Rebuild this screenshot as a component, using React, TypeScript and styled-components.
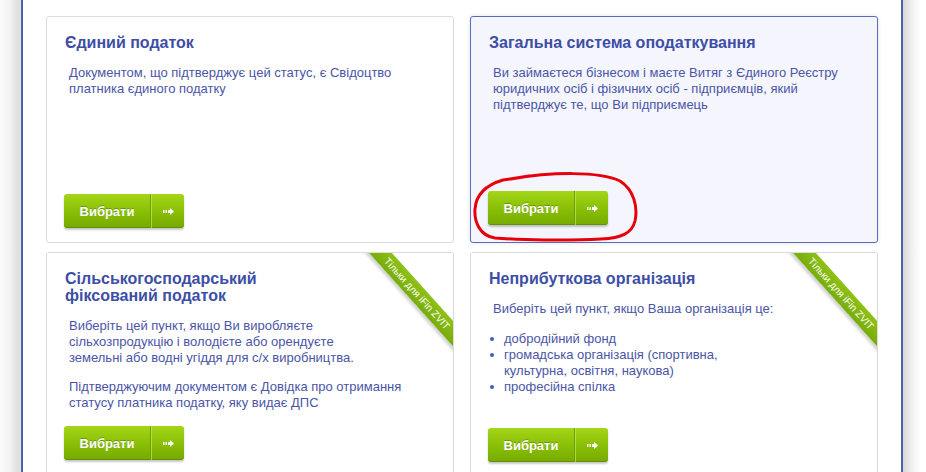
import React from "react";
import styled, { createGlobalStyle } from "styled-components";

const Global = createGlobalStyle`
  html, body { margin: 0; padding: 0; background: #fff; }
  body { font-family: "Liberation Sans", Arial, sans-serif; overflow: hidden; }
`;

const Page = styled.div`
  display: flex;
  width: 926px;
  height: 472px;
  overflow: hidden;
`;

const LeftShade = styled.div`
  width: 21px;
  flex: none;
  background: linear-gradient(to right, #fbfbfb 0, #f3f3f3 45%, #dedede 90%, #e6e6e6 100%);
`;

const RightShade = styled.div`
  flex: 1;
  background: linear-gradient(to right, #d6d6d6 0, #e6e6e6 5px, #f6f6f6 12px, #fff 18px);
`;

const Main = styled.main`
  width: 882px;
  flex: none;
  border-left: 2px solid #5262a8;
  border-right: 2px solid #5262a8;
  padding: 16px 0 0 23px;
  box-sizing: border-box;
`;

const Grid = styled.div`
  display: grid;
  grid-template-columns: 408px 408px;
  grid-template-rows: 227px auto;
  column-gap: 16px;
  row-gap: 9px;
`;

const Card = styled.section<{ $selected?: boolean; $pb: number }>`
  position: relative;
  display: flex;
  flex-direction: column;
  box-sizing: border-box;
  padding: 17px 18px ${(p) => p.$pb}px 17px;
  border: 1px solid ${(p) => (p.$selected ? "#5a68c0" : "#dcdcdc")};
  border-radius: 3px;
  background: ${(p) => (p.$selected ? "#f5f6fd" : "#fff")};
  box-shadow: ${(p) => (p.$selected ? "0 0 4px rgba(0,0,0,0.12)" : "none")};
  overflow: hidden;
`;

const Title = styled.h2`
  margin: 0 0 14px 1px;
  font-size: 16px;
  line-height: 17px;
  font-weight: bold;
  color: #3d4ea6;
`;

const Text = styled.p<{ $mb?: number }>`
  margin: 0 0 ${(p) => p.$mb ?? 13}px 5px;
  font-size: 13px;
  line-height: 16px;
  color: #4a55a6;
`;

const List = styled.ul`
  margin: 0;
  padding: 0 0 0 16px;
  list-style: none;
`;

const Item = styled.li`
  position: relative;
  font-size: 13px;
  line-height: 16px;
  color: #4a55a6;
  &::before {
    content: "";
    position: absolute;
    left: -14px;
    top: 6px;
    width: 4px;
    height: 4px;
    border-radius: 50%;
    background: #4a5ab0;
  }
`;

const Button = styled.button<{ $mt?: string }>`
  margin-top: ${(p) => p.$mt ?? "auto"};
  display: flex;
  align-items: stretch;
  width: 120px;
  height: 34px;
  padding: 0;
  border: none;
  border-radius: 3px;
  background: linear-gradient(to bottom, #a4d618 0%, #8cc208 45%, #76aa00 100%);
  box-shadow: 0 2px 2px rgba(0, 0, 0, 0.22), inset 0 -1px 0 rgba(60, 100, 0, 0.35);
  cursor: pointer;
  flex: none;
`;

const Label = styled.span`
  width: 86px;
  display: flex;
  align-items: center;
  justify-content: center;
  font-family: "Liberation Sans", Arial, sans-serif;
  font-weight: bold;
  font-size: 13px;
  color: #fff;
  text-shadow: 0 -1px 0 rgba(60, 100, 0, 0.45);
  border-right: 1px solid #6f9f00;
`;

const ArrowPart = styled.span`
  flex: 1;
  display: flex;
  align-items: center;
  justify-content: center;
  border-left: 1px solid rgba(200, 240, 110, 0.6);
`;

const RibbonClip = styled.div`
  position: absolute;
  top: 0;
  right: 0;
  width: 92px;
  height: 112px;
  overflow: hidden;
  pointer-events: none;
`;

const Ribbon = styled.div`
  position: absolute;
  left: -29px;
  top: 32px;
  width: 170px;
  height: 17px;
  transform: rotate(48deg);
  background: linear-gradient(to bottom, #8ec21a, #78ac08);
  box-shadow: 0 3px 3px rgba(0, 0, 0, 0.18);
  display: flex;
  align-items: center;
  justify-content: center;
  font-family: "Liberation Sans", Arial, sans-serif;
  font-size: 10px;
  color: #fff;
  white-space: nowrap;
`;

const Scribble = styled.svg`
  position: absolute;
  left: 0;
  top: 0;
  pointer-events: none;
`;

const Arrow = () => (
  <svg width="11" height="7" viewBox="0 0 11 7">
    <rect x="0" y="2" width="1.5" height="3" fill="#fff" />
    <rect x="2.5" y="2" width="1.5" height="3" fill="#fff" />
    <rect x="5" y="2" width="2.5" height="3" fill="#fff" />
    <polygon points="7,0 11,3.5 7,7" fill="#fff" />
  </svg>
);

const ChooseButton = ({ mt }: { mt?: string }) => (
  <Button $mt={mt}>
    <Label>Вибрати</Label>
    <ArrowPart>
      <Arrow />
    </ArrowPart>
  </Button>
);

const Badge = () => (
  <RibbonClip>
    <Ribbon>Тільки для iFin ZVIT</Ribbon>
  </RibbonClip>
);

export default function App() {
  return (
    <>
      <Global />
      <Page>
        <LeftShade />
        <Main>
          <Grid>
            <Card $pb={14}>
              <Title>Єдиний податок</Title>
              <Text>
                Документом, що підтверджує цей статус, є Свідоцтво
                <br />
                платника єдиного податку
              </Text>
              <ChooseButton />
            </Card>

            <Card $selected $pb={17}>
              <Title>Загальна система оподаткування</Title>
              <Text>
                Ви займаєтеся бізнесом і маєте Витяг з Єдиного Реєстру
                <br />
                юридичних осіб і фізичних осіб - підприємців, який
                <br />
                підтверджує те, що Ви підприємець
              </Text>
              <ChooseButton />
              <Scribble width="175" height="227" viewBox="0 0 175 227">
                <path
                  d="M 40 162 C 80 155, 128 154, 149 164 C 163 173, 167 190, 164 204 C 161 216, 151 221, 130 222 C 95 224, 50 223, 24 221 C 9 219, 3 205, 4 192 C 5 178, 15 168, 32 163 L 58 159"
                  fill="none"
                  stroke="#e6000c"
                  strokeWidth="3"
                  strokeLinecap="round"
                  strokeLinejoin="round"
                />
              </Scribble>
            </Card>

            <Card $pb={14}>
              <Badge />
              <Title>
                Сільськогосподарський
                <br />
                фіксований податок
              </Title>
              <Text>
                Виберіть цей пункт, якщо Ви виробляєте
                <br />
                сільхозпродукцію і володієте або орендуєте
                <br />
                земельні або водні угіддя для с/х виробництва.
              </Text>
              <Text $mb={0}>
                Підтверджуючим документом є Довідка про отримання
                <br />
                статусу платника податку, яку видає ДПС
              </Text>
              <ChooseButton mt="15px" />
            </Card>

            <Card $pb={14}>
              <Badge />
              <Title>Неприбуткова організація</Title>
              <Text $mb={14}>Виберіть цей пункт, якщо Ваша організація це:</Text>
              <List>
                <Item>добродійний фонд</Item>
                <Item>
                  громадська організація (спортивна,
                  <br />
                  культурна, освітня, наукова)
                </Item>
                <Item>професійна спілка</Item>
              </List>
              <ChooseButton mt="33px" />
            </Card>
          </Grid>
        </Main>
        <RightShade />
      </Page>
    </>
  );
}
